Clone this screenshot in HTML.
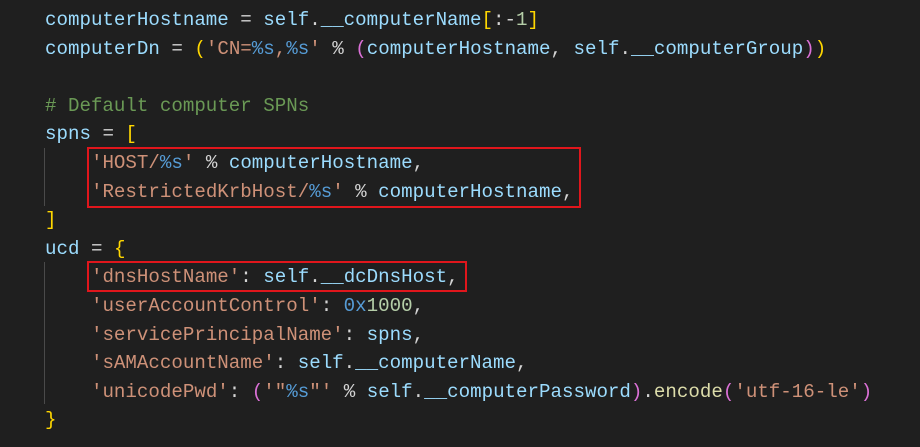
<!DOCTYPE html>
<html><head><style>
body{margin:0;background:#1f1f1f;width:920px;height:447px;overflow:hidden;position:relative}
pre{margin:0;position:absolute;left:45px;top:6px;font-family:"Liberation Mono",monospace;font-size:19.15px;line-height:28.6px;color:#d4d4d4}
.v{color:#9cdcfe}.s{color:#ce9178}.f{color:#569cd6}.c{color:#6a9955}.y{color:#ffd700}.p{color:#da70d6}.n{color:#b5cea8}.fn{color:#dcdcaa}
.box{position:absolute;border:2px solid #e0161c;box-sizing:border-box}
.g{position:absolute;left:44px;width:1px;background:#4a4a4a}
</style></head><body>
<div class="g" style="top:148px;height:58px"></div>
<div class="g" style="top:262px;height:142px"></div>
<pre><span class="v">computerHostname</span> = <span class="v">self</span>.<span class="v">__computerName</span><span class="y">[</span>:-<span class="n">1</span><span class="y">]</span>
<span class="v">computerDn</span> = <span class="y">(</span><span class="s">'CN=<span class="f">%s</span>,<span class="f">%s</span>'</span> % <span class="p">(</span><span class="v">computerHostname</span>, <span class="v">self</span>.<span class="v">__computerGroup</span><span class="p">)</span><span class="y">)</span>

<span class="c"># Default computer SPNs</span>
<span class="v">spns</span> = <span class="y">[</span>
    <span class="s">'HOST/<span class="f">%s</span>'</span> % <span class="v">computerHostname</span>,
    <span class="s">'RestrictedKrbHost/<span class="f">%s</span>'</span> % <span class="v">computerHostname</span>,
<span class="y">]</span>
<span class="v">ucd</span> = <span class="y">{</span>
    <span class="s">'dnsHostName'</span>: <span class="v">self</span>.<span class="v">__dcDnsHost</span>,
    <span class="s">'userAccountControl'</span>: <span class="f">0x</span><span class="n">1000</span>,
    <span class="s">'servicePrincipalName'</span>: <span class="v">spns</span>,
    <span class="s">'sAMAccountName'</span>: <span class="v">self</span>.<span class="v">__computerName</span>,
    <span class="s">'unicodePwd'</span>: <span class="p">(</span><span class="s">'"<span class="f">%s</span>"'</span> % <span class="v">self</span>.<span class="v">__computerPassword</span><span class="p">)</span>.<span class="fn">encode</span><span class="p">(</span><span class="s">'utf-16-le'</span><span class="p">)</span>
<span class="y">}</span></pre>
<div class="box" style="left:87px;top:147px;width:494px;height:61px"></div>
<div class="box" style="left:87px;top:261px;width:380px;height:31px"></div>
</body></html>
